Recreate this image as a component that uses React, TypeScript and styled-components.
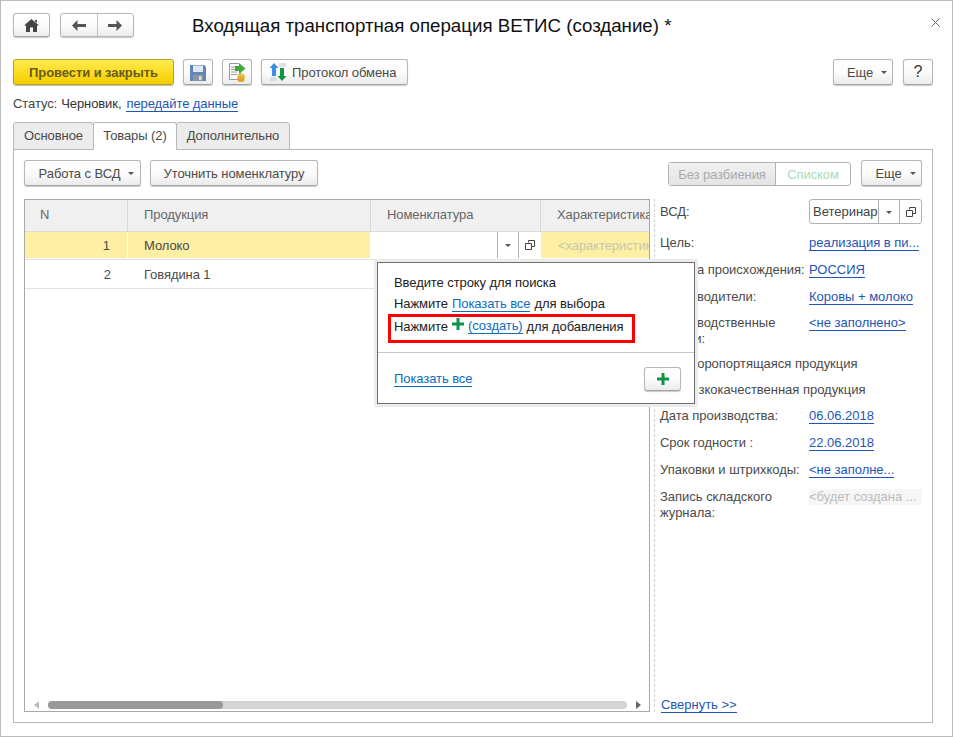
import React from "react";
import styled, { createGlobalStyle } from "styled-components";

const Global = createGlobalStyle`
  html, body { margin: 0; padding: 0; background: #fff; }
  body { font-family: "Liberation Sans", Arial, sans-serif; font-size: 13px; letter-spacing: -0.08px; color: #4a4a4a; }
  * { box-sizing: border-box; }
`;

const Win = styled.div`
  width: 953px; height: 737px; border: 1px solid #bcbcbc; padding: 12px 19px 13px 12px;
  display: flex; flex-direction: column; background: #fff; overflow: hidden;
`;
const HeadRow = styled.div`display: flex; align-items: center; height: 24px;`;
const Title = styled.div`margin-left: 58px; padding-top: 2px; font-size: 18.7px; letter-spacing: 0; color: #111; white-space: nowrap; line-height: 28px;`;
const Close = styled.svg`margin-left: auto; margin-right: -7px; margin-bottom: 6px; width: 9px; height: 9px;`;

const Btn = styled.button<{ $w?: number; $h?: number; $caret?: boolean }>`
  width: ${p => (p.$w ? p.$w + "px" : "auto")}; height: ${p => p.$h ?? 26}px;
  flex: none; display: inline-flex; align-items: center; justify-content: center; gap: ${p => (p.$caret ? 8 : 7)}px;
  padding: 0 0 0 ${p => (p.$caret ? 8 : 0)}px;
  background: linear-gradient(#ffffff 0%, #fbfbfb 55%, #ebebeb 100%);
  border: 1px solid #b7b7b7; border-bottom-color: #a4a4a4; border-radius: 3px; box-shadow: 0 1px 1px #c9c9c9;
  font: 13px "Liberation Sans", Arial, sans-serif; letter-spacing: -0.08px; color: #4a4a4a; white-space: nowrap;
`;
const Segmented = styled.div`
  display: flex; width: 74px; height: 24px; margin-left: 10px; border: 1px solid #b7b7b7; border-radius: 3px;
  box-shadow: 0 1px 1px #c9c9c9; background: linear-gradient(#ffffff, #fbfbfb 55%, #ebebeb);
`;
const SegCell = styled.div`
  flex: 1; display: flex; align-items: center; justify-content: center;
  & + & { border-left: 1px solid #c4c4c4; }
`;
const Toolbar = styled.div`display: flex; align-items: center; gap: 9px; height: 26px; margin-top: 22px;`;
const Primary = styled(Btn)`
  background: linear-gradient(#ffea52 0%, #fbdc1e 55%, #f2cd00 100%);
  border-color: #b79f24; font-weight: bold; color: #6a5a1b; box-shadow: 0 1px 1px #bdbdbd;
`;
const Exchange = styled(Btn)`justify-content: flex-start; padding-left: 7px; gap: 5px;`;
const Spacer = styled.div`flex: 1;`;
const Help = styled(Btn)`font-size: 16px; color: #333; margin-left: 1px;`;
const Caret = styled.i`
  display: inline-block; width: 0; height: 0; border: 3px solid transparent; border-top: 3px solid #555; border-bottom: 0;
  margin-top: 1px;
`;
const Status = styled.div`display: flex; gap: 4px; height: 16px; margin-top: 11px; line-height: 16px; color: #444;`;
const Strong = styled.span`color: #333; margin-right: 1px;`;
const Link = styled.a<{ $c?: string }>`
  color: ${p => p.$c ?? "#1f55b5"}; border-bottom: 1px solid ${p => p.$c ?? "#1f55b5"}; line-height: 15px;
  display: inline-block; height: 16px; white-space: nowrap;
`;
const Tabs = styled.div`display: flex; height: 28px; margin-top: 10px; margin-bottom: -1px; position: relative; z-index: 1;`;
const Tab = styled.div<{ $w: number; $on?: boolean }>`
  width: ${p => p.$w}px; height: 28px; border: 1px solid #b8b8b8; border-radius: 3px 3px 0 0;
  border-bottom-color: ${p => (p.$on ? "#fff" : "#b8b8b8")};
  background: ${p => (p.$on ? "#fff" : "#ececec")}; color: #4a4a4a;
  display: flex; align-items: center; justify-content: center; padding-bottom: 2px;
  & + & { margin-left: -1px; }
`;
const Panel = styled.div`
  flex: 1; min-height: 0; border: 1px solid #b8b8b8; padding: 10px; display: flex; flex-direction: column;
`;
const PanelBar = styled.div`display: flex; align-items: center; gap: 9px; height: 26px;`;
const Switch = styled.div`
  display: flex; width: 183px; height: 24px; margin-right: 1px; margin-top: 2px; border: 1px solid #b2b2b2; border-radius: 3px;
`;
const SwOff = styled.div`
  width: 107px; display: flex; align-items: center; justify-content: center; color: #aaa;
  background: linear-gradient(#f1f1f1, #e4e4e4); border-right: 1px solid #b2b2b2;
`;
const SwOn = styled.div`flex: 1; display: flex; align-items: center; justify-content: center; color: #a6dcbc;`;
const Main = styled.div`flex: 1; min-height: 0; margin-top: 13px; display: flex; position: relative;`;
const Table = styled.div`
  width: 626px; border: 1px solid #a8a8a8; display: flex; flex-direction: column; position: relative;
`;
const Row = styled.div<{ $h: number; $line?: boolean }>`
  display: grid; grid-template-columns: 103px 243px 170px 108px; height: ${p => p.$h}px; flex: none;
  border-bottom: ${p => (p.$line ? "1px solid #e2e2e2" : "0")};
`;
const HCell = styled.div<{ $last?: boolean; $first?: boolean }>`
  background: #f0f0f0; color: #666; padding: 0 0 2px ${p => (p.$first ? 15 : 16)}px; display: flex; align-items: center;
  border-right: ${p => (p.$last ? "0" : "1px solid #d8d8d8")}; border-bottom: 1px solid #dcdcdc; white-space: nowrap; overflow: hidden;
`;
const Cell = styled.div<{ $y?: boolean; $r?: boolean }>`
  display: flex; align-items: center; color: #4a4a4a; white-space: nowrap; overflow: hidden;
  background: ${p => (p.$y ? "#fdf0a5" : "#fff")}; margin-bottom: ${p => (p.$y ? "1px" : "0")};
  border-right: ${p => (p.$y ? "1px solid #fff" : "0")};
  padding: ${p => (p.$r ? "0 17px 0 0" : "0 0 0 16px")}; justify-content: ${p => (p.$r ? "flex-end" : "flex-start")};
`;
const EditCell = styled.div`display: flex; height: 26px; background: #fff;`;
const EditInput = styled.div`flex: 1;`;
const EditBtn = styled.div<{ $w: number }>`
  width: ${p => p.$w}px; display: flex; align-items: center; justify-content: center; border-left: 1px solid #b2b2b2;
`;
const Ghost = styled(Cell)`color: #c9c6ab; padding-left: 17px; border-right: 0;`;
const Scroll = styled.div`
  margin-top: auto; height: 8px; margin-bottom: 2px; display: flex; align-items: center; padding: 0 8px 0 9px; gap: 9px;
`;
const Track = styled.div`flex: 1; height: 8px; background: #d4d4d4; border-radius: 4px;`;
const Thumb = styled.div<{ $w: number }>`width: ${p => p.$w}px; height: 8px; background: #999; border-radius: 4px;`;
const ArrowL = styled.i`border: 4px solid transparent; border-right: 5px solid #bbb; border-left: 0;`;
const ArrowR = styled.i`border: 4px solid transparent; border-left: 5px solid #666; border-right: 0;`;
const Side = styled.div`
  width: 268px; margin-left: 4px; padding-left: 5px; border-left: 1px dashed #cfcfcf; display: flex; flex-direction: column; position: relative;
  letter-spacing: -0.02px;
`;
const Field = styled.div<{ $h: number; $top?: number }>`
  display: grid; grid-template-columns: 149px 113px; height: ${p => p.$h}px; flex: none;
  align-items: ${p => (p.$top !== undefined ? "start" : "center")}; padding-top: ${p => p.$top ?? 0}px; line-height: 16px;
`;
const Label = styled.div`color: #4a4a4a;`;
const ComboLabel = styled(Label)`line-height: 25px;`;
const Checked = styled.div`grid-column: 1 / 3; display: flex; align-items: center; gap: 8px; color: #4a4a4a; white-space: nowrap;`;
const Check = styled.i`width: 14px; height: 14px; border: 1px solid #aaa; display: block;`;
const Combo = styled.div`display: flex; height: 25px; border: 1px solid #b2b2b2; border-radius: 3px;`;
const ComboText = styled.div`flex: 1; padding-left: 3px; line-height: 23px; color: #444; overflow: hidden;`;
const Disabled = styled.div`background: #f6f6f6; color: #bbb; white-space: nowrap; height: 16px; line-height: 16px; overflow: hidden;`;
const Collapse = styled.div`margin-top: auto; padding-left: 1px; height: 16px; margin-bottom: -1px;`;
const Popup = styled.div`
  position: absolute; left: 353px; top: 63px; width: 318px; height: 142px; z-index: 5; background: #fff;
  border: 1px solid #6f6f6f; box-shadow: 0 0 0 3px #ececec; display: flex; flex-direction: column; color: #222;
`;
const PopTop = styled.div`height: 90px; padding-top: 12px; border-bottom: 1px solid #c6c6c6; padding-left: 16px;`;
const PopLine = styled.div`height: 21px; line-height: 16px; display: flex; gap: 4px; white-space: nowrap;`;
const Marked = styled.div`
  margin-left: -6px; width: 247px; height: 29px; border: 3px solid #f00; padding: 0 0 5px 3px; display: flex; align-items: center; gap: 4px; white-space: nowrap; margin-top: -3px;
`;
const PlusRaise = styled.span`display: flex; margin-bottom: 4px;`;
const PopBottom = styled.div`flex: 1; display: flex; align-items: center; justify-content: space-between; padding: 2px 13px 0 16px;`;

const Plus = ({ s = 12 }: { s?: number }) => (
  <svg width={s} height={s} viewBox="0 0 12 12"><path d="M4.5 0h3v4.5H12v3H7.5V12h-3V7.5H0v-3h4.5z" fill="#0c9447" /></svg>
);
const OpenIcon = () => (
  <svg width="10" height="10" viewBox="0 0 10 10" fill="none" stroke="#444"><path d="M3.5 2.5v-2h6v6h-3M.5 3.5h6v6h-6z" /></svg>
);
const Floppy = () => (
  <svg width="16" height="17" viewBox="0 0 16 17">
    <path d="M0 1h14l2 2v14H0z" fill="#5f86b6" />
    <rect x="3" y="1.500" width="10" height="6.500" fill="#dfe8f2" />
    <rect x="3" y="10.500" width="10" height="6.500" fill="#8a96a3" />
    <rect x="9" y="12" width="2.500" height="4" fill="#ddd" />
  </svg>
);
const Post = () => (
  <svg width="17" height="19" viewBox="0 0 17 19">
    <path d="M.5.5h9l2 2v14H.5z" fill="#fff" stroke="#999" />
    <path d="M2 4h6M2 6.500h6M2 9h6M2 11.500h6" stroke="#9a9a9a" />
    <path d="M6 3h4V0l6.500 5.500L10 11V8H6z" fill="#43a83c" />
    <ellipse cx="12" cy="12" rx="3.500" ry="1.500" fill="#eec23d" />
    <path d="M8.500 12v5.500c0 2 7 2 7 0V12c0 2-7 2-7 0z" fill="#dba928" />
  </svg>
);
const Exch = () => (
  <svg width="18" height="18" viewBox="0 0 18 18">
    <path d="M5 0l4.500 5H7v8H3V5H.5z" fill="#3a8de0" />
    <path d="M13 18l-4.500-5H11V5h4v8h2.500z" fill="#119544" />
    <path d="M1 15h7M1 17h7M10 1h7M10 3h7" stroke="#c4c4c4" />
  </svg>
);

const App = () => (
  <Win>
    <Global />
    <HeadRow>
      <Btn $w={37} $h={24}>
        <svg width="15" height="13" viewBox="0 0 15 13"><path d="M7.500 0L15 6.500h-2V13H9V8.500H6V13H2V6.500H0zM11 1h2v3l-2-1.700z" fill="#444" /></svg>
      </Btn>
      <Segmented>
        <SegCell><svg width="14" height="11" viewBox="0 0 14 11"><path d="M0 5.500L5.500 0v4H14v3H5.500v4z" fill="#555" /></svg></SegCell>
        <SegCell><svg width="14" height="11" viewBox="0 0 14 11"><path d="M14 5.500L8.500 0v4H0v3h8.500v4z" fill="#555" /></svg></SegCell>
      </Segmented>
      <Title>Входящая транспортная операция ВЕТИС (создание) *</Title>
      <Close viewBox="0 0 9 9"><path d="M.5.5l8 8M8.500.5l-8 8" stroke="#666" /></Close>
    </HeadRow>
    <Toolbar>
      <Primary $w={161}>Провести и закрыть</Primary>
      <Btn $w={30}><Floppy /></Btn>
      <Btn $w={30}><Post /></Btn>
      <Exchange $w={147}><Exch />Протокол обмена</Exchange>
      <Spacer />
      <Btn $w={60} $caret>Еще <Caret /></Btn>
      <Help $w={30}>?</Help>
    </Toolbar>
    <Status>Статус: <Strong>Черновик,</Strong> <Link>передайте данные</Link></Status>
    <Tabs>
      <Tab $w={81}>Основное</Tab>
      <Tab $w={84} $on>Товары (2)</Tab>
      <Tab $w={114}>Дополнительно</Tab>
    </Tabs>
    <Panel>
      <PanelBar>
        <Btn $w={117} $caret>Работа с ВСД <Caret /></Btn>
        <Btn $w={168}>Уточнить номенклатуру</Btn>
        <Spacer />
        <Switch><SwOff>Без разбиения</SwOff><SwOn>Списком</SwOn></Switch>
        <Btn $w={61} $caret>Еще <Caret /></Btn>
      </PanelBar>
      <Main>
        <Table>
          <Row $h={32}>
            <HCell $first>N</HCell><HCell>Продукция</HCell><HCell>Номенклатура</HCell><HCell $last>Характеристика</HCell>
          </Row>
          <Row $h={28} $line>
            <Cell $y $r>1</Cell>
            <Cell $y>Молоко</Cell>
            <EditCell>
              <EditInput />
              <EditBtn $w={21}><Caret /></EditBtn>
              <EditBtn $w={23}><OpenIcon /></EditBtn>
            </EditCell>
            <Ghost $y>&lt;характеристика&gt;</Ghost>
          </Row>
          <Row $h={29} $line>
            <Cell $r>2</Cell>
            <Cell>Говядина 1</Cell>
            <Cell /><Cell />
          </Row>
          <Scroll>
            <ArrowL />
            <Track><Thumb $w={175} /></Track>
            <ArrowR />
          </Scroll>
        </Table>
        <Side>
          <Field $h={31} $top={0}>
            <ComboLabel>ВСД:</ComboLabel>
            <Combo>
              <ComboText>Ветеринар</ComboText>
              <EditBtn $w={21}><Caret /></EditBtn>
              <EditBtn $w={22}><OpenIcon /></EditBtn>
            </Combo>
          </Field>
          <Field $h={26}><Label>Цель:</Label><div><Link>реализация в пи...</Link></div></Field>
          <Field $h={27}><Label>Страна происхождения:</Label><div><Link>РОССИЯ</Link></div></Field>
          <Field $h={28}><Label>Производители:</Label><div><Link>Коровы + молоко</Link></div></Field>
          <Field $h={40} $top={4}>
            <Label>Производственные<br />партии:</Label>
            <div><Link>&lt;не заполнено&gt;</Link></div>
          </Field>
          <Field $h={26}><Checked><Check />Скоропортящаяся продукция</Checked></Field>
          <Field $h={26}><Checked><Check />Низкокачественная продукция</Checked></Field>
          <Field $h={26}><Label>Дата производства:</Label><div><Link>06.06.2018</Link></div></Field>
          <Field $h={27}><Label>Срок годности :</Label><div><Link>22.06.2018</Link></div></Field>
          <Field $h={27}><Label>Упаковки и штрихкоды:</Label><div><Link>&lt;не заполне...</Link></div></Field>
          <Field $h={40} $top={6}>
            <Label>Запись складского<br />журнала:</Label>
            <Disabled>&lt;будет создана ...</Disabled>
          </Field>
          <Collapse><Link>Свернуть &gt;&gt;</Link></Collapse>
        </Side>
        <Popup>
          <PopTop>
            <PopLine>Введите строку для поиска</PopLine>
            <PopLine>Нажмите <Link $c="#0f6cbd">Показать все</Link> для выбора</PopLine>
            <Marked>Нажмите <PlusRaise><Plus /></PlusRaise> <Link $c="#0f6cbd">(создать)</Link> для добавления</Marked>
          </PopTop>
          <PopBottom>
            <Link $c="#0f6cbd">Показать все</Link>
            <Btn $w={37} $h={24}><Plus /></Btn>
          </PopBottom>
        </Popup>
      </Main>
    </Panel>
  </Win>
);

export default App;
